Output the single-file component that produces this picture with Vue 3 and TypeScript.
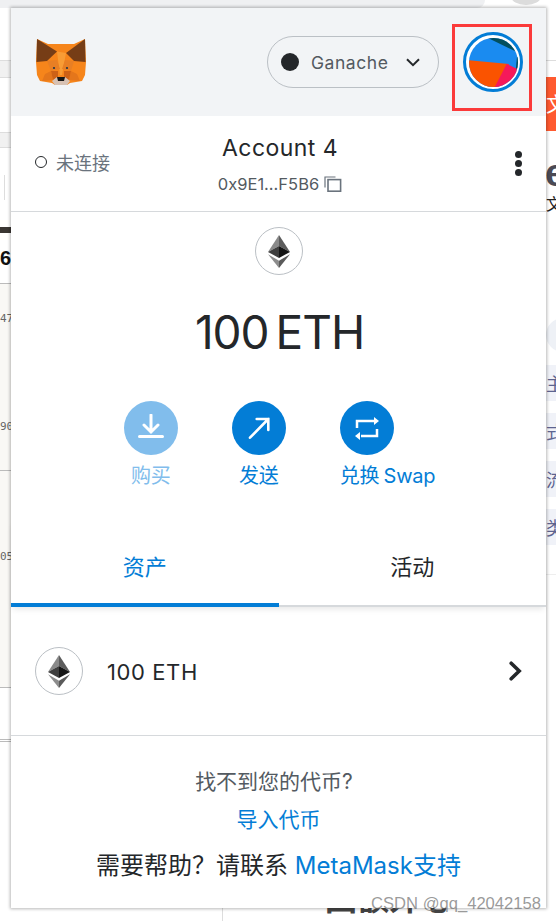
<script setup lang="ts">
const actions = [
  { label: '购买', kind: 'buy', muted: true },
  { label: '发送', kind: 'send', muted: false },
  { label: '兑换 Swap', kind: 'swap', muted: false },
]
</script>

<template>
  <div class="page">
    <div class="scrap top-strip"></div>
    <div class="scrap top-knob"></div>
    <div class="scrap left-band-a"></div>
    <div class="scrap left-band-b"></div>
    <div class="scrap left-tick"></div>
    <div class="scrap left-dark"></div>
    <div class="scrap left-six">6</div>
    <div class="scrap left-beige"></div>
    <div class="scrap left-line-a"></div>
    <div class="scrap left-line-b"></div>
    <div class="scrap left-line-c"></div>
    <div class="scrap left-n47">47</div>
    <div class="scrap left-n90">90</div>
    <div class="scrap left-n05">05</div>
    <div class="scrap right-line"></div>
    <div class="scrap right-red">文</div>
    <div class="scrap right-e">e</div>
    <div class="scrap right-wen">文</div>
    <div class="scrap right-bubble"></div>
    <div class="scrap right-row r1">主</div>
    <div class="scrap right-row r2">式</div>
    <div class="scrap right-row r3">流</div>
    <div class="scrap right-row r4">类</div>
    <div class="scrap bottom-tick"></div>
    <div class="scrap bottom-text">回额外心</div>

    <main class="popup">
      <header class="head">
        <svg class="fox" viewBox="0 0 50 46" width="50" height="46">
          <polygon points="1,0 12,5 38,5 49,0 50,23 49,36 46,42 34,44 31,46 19,46 16,44 4,42 1,36 0,23" fill="#f6851b" />
          <polygon points="1,0 21,12.5 11,22 0.5,23" fill="#763d16" />
          <polygon points="49,0 30,14 38,22 49.5,23" fill="#763d16" />
          <polygon points="21,12.5 30,14 26,36 24,36" fill="#f89c35" />
          <polygon points="11,22 21,21 24,30 15,32" fill="#e87f24" />
          <polygon points="38,22 29,21 26,30 35,32" fill="#e87f24" />
          <polygon points="9,35 15,32 17,41 6,42" fill="#e4761b" />
          <polygon points="41,35 35,32 33,41 44,42" fill="#e4761b" />
          <polygon points="15,32 22,32 22,38 17,41" fill="#cd6116" />
          <polygon points="35,32 28,32 28,38 33,41" fill="#cd6116" />
          <polygon points="16,42 21,38 29,38 34,42 31,46 19,46" fill="#d7c1b3" />
          <polygon points="21,38 29,38 28,42 22,42" fill="#161616" />
          <circle cx="18" cy="29" r="1.1" fill="#233447" />
          <circle cx="31" cy="29" r="1.1" fill="#233447" />
        </svg>
        <div class="network">
          <span class="net-dot"></span>
          <span class="net-name">Ganache</span>
          <svg class="net-chev" viewBox="0 0 14 9" width="14" height="9"><path d="M1 1.2 7 7.2 13 1.2" fill="none" stroke="#24272a" stroke-width="2" /></svg>
        </div>
        <div class="avatar-ring">
          <svg class="avatar" viewBox="0 0 49 49" width="49" height="49">
            <defs><clipPath id="av"><circle cx="24.5" cy="24.5" r="24.5" /></clipPath></defs>
            <g clip-path="url(#av)">
              <rect width="49" height="49" fill="#1a8bf0" />
              <polygon points="19,0 50,-1 50,15" fill="#034f5d" />
              <polygon points="48,19 50,19 50,33 46.8,31" fill="#034f5d" />
              <polygon points="-2,22 40,26 26,52 -2,52" fill="#fa5300" />
              <polygon points="37.8,25.8 47.8,30.8 49,52 25.5,49.5" fill="#f5195a" />
            </g>
          </svg>
        </div>
      </header>

      <section class="account">
        <div class="status"><span class="status-dot"></span><span class="status-text">未连接</span></div>
        <div class="acct-mid">
          <div class="acct-name">Account 4</div>
          <div class="acct-addr">
            <span>0x9E1...F5B6</span>
            <svg class="copy" viewBox="0 0 18 16" width="18" height="16">
              <path d="M1 11.5V1h10.5" fill="none" stroke="#6a737d" stroke-width="1.2" />
              <rect x="4" y="3.6" width="12.6" height="11.6" fill="none" stroke="#6a737d" stroke-width="1.6" />
            </svg>
          </div>
        </div>
        <div class="kebab"><i></i><i></i><i></i></div>
      </section>

      <section class="balance">
        <div class="eth-badge">
          <svg viewBox="0 0 24 36" width="22" height="33">
            <polygon points="12,0 0,18.5 12,12" fill="#8a8a8a" />
            <polygon points="12,0 24,18.5 12,12" fill="#5c5c5c" />
            <polygon points="0,18.5 12,12 12,25" fill="#3e3e3e" />
            <polygon points="24,18.5 12,12 12,25" fill="#151515" />
            <polygon points="0,21 12,28 12,36" fill="#8d8d8d" />
            <polygon points="24,21 12,28 12,36" fill="#5a5a5a" />
          </svg>
        </div>
        <div class="amount">100 ETH</div>
        <div class="actions">
          <div v-for="a in actions" :key="a.kind" class="action" :class="{ muted: a.muted }">
            <span class="action-circle">
              <svg v-if="a.kind === 'buy'" viewBox="0 0 26 28" width="26" height="28">
                <path d="M13 1v17M6 11l7 7 7-7M1.5 22.5h23" fill="none" stroke="#fff" stroke-width="3" stroke-linecap="round" />
              </svg>
              <svg v-else-if="a.kind === 'send'" viewBox="0 0 24 24" width="24" height="24">
                <path d="M3 21.7 21.3 3M9.7 3H21.3V14" fill="none" stroke="#fff" stroke-width="2.6" stroke-linecap="round" />
              </svg>
              <svg v-else viewBox="0 0 24 24" width="24" height="24">
                <path d="M2 12V5H19M22 13V20H6" fill="none" stroke="#fff" stroke-width="2.5" />
                <polygon points="19,1 24,5 19,9" fill="#fff" />
                <polygon points="5,16 0,20 5,24" fill="#fff" />
              </svg>
            </span>
            <span class="action-label">{{ a.label }}</span>
          </div>
        </div>
      </section>

      <nav class="tabs">
        <div class="tab active">资产</div>
        <div class="tab">活动</div>
      </nav>

      <section class="asset">
        <div class="eth-badge">
          <svg viewBox="0 0 24 36" width="22" height="33">
            <polygon points="12,0 0,18.5 12,12" fill="#8a8a8a" />
            <polygon points="12,0 24,18.5 12,12" fill="#5c5c5c" />
            <polygon points="0,18.5 12,12 12,25" fill="#3e3e3e" />
            <polygon points="24,18.5 12,12 12,25" fill="#151515" />
            <polygon points="0,21 12,28 12,36" fill="#8d8d8d" />
            <polygon points="24,21 12,28 12,36" fill="#5a5a5a" />
          </svg>
        </div>
        <span class="asset-text">100 ETH</span>
        <svg class="asset-chev" viewBox="0 0 13 20" width="13" height="20"><path d="M2.2 2.2l8 7.8-8 7.8" fill="none" stroke="#24272a" stroke-width="3.6" stroke-linecap="round" /></svg>
      </section>

      <footer class="foot">
        <div class="foot-q">找不到您的代币?</div>
        <div class="foot-link">导入代币</div>
        <div class="foot-help"><span class="cjk">需要帮助&#xFF1F;请联系</span> <span class="blue">MetaMask支持</span></div>
      </footer>
    </main>

    <div class="redbox"></div>
    <div class="watermark">CSDN @qq_42042158</div>
  </div>
</template>

<style>
html, body { margin: 0; background: #fff; }
</style>

<style scoped>
.page {
  position: relative;
  width: 556px;
  height: 921px;
  overflow: hidden;
  background: #fff;
  font-family: Inter, "Noto Sans CJK SC", sans-serif;
  color: #24272a;
}
.scrap { position: absolute; }
.top-strip { left: 0; width: 485px; top: 0; height: 8px; background: #eff0f2; border-radius: 0 0 8px 0; }
.top-knob { left: 511px; top: -12px; width: 30px; height: 17px; border-radius: 50%; background: #dcdcdc; }
.left-band-a { left: 0; width: 11px; top: 60px; height: 16px; background: #f1f1f1; border-top: 1px solid #ddd; border-bottom: 1px solid #ddd; }
.left-band-b { left: 0; width: 11px; top: 132px; height: 14px; background: #f1f1f1; border-top: 1px solid #ddd; border-bottom: 1px solid #ddd; }
.left-tick { left: 4px; width: 1px; top: 175px; height: 25px; background: #ddd; }
.left-dark { left: 0; width: 11px; top: 227px; height: 6px; background: #3a3633; }
.left-six { left: 0; top: 246px; font: 700 20px/24px "Liberation Sans", sans-serif; color: #111; }
.left-beige { left: 0; width: 11px; top: 283px; height: 405px; background: #f9f8f5; }
.left-line-a { left: 0; width: 11px; top: 283px; height: 1px; background: #bbb; }
.left-line-b { left: 0; width: 11px; top: 470px; height: 1px; background: #bbb; }
.left-line-c { left: 0; width: 11px; top: 687px; height: 1px; background: #bbb; box-shadow: 0 52px 0 #bbb, 0 54px 0 #bbb; }
.left-n47, .left-n90, .left-n05 { left: 0; width: 11px; overflow: hidden; font: 11px/14px "DejaVu Sans Mono", monospace; color: #666; }
.left-n47 { top: 312px; }
.left-n90 { top: 420px; }
.left-n05 { top: 550px; }
.right-line { left: 546px; right: 0; top: 60px; height: 1px; background: #ddd; box-shadow: 0 514px 0 #eee; }
.right-red { left: 546px; right: 0; top: 77px; height: 54px; overflow: hidden; background: #ff5a30; color: #fff; font: 20px/54px "Noto Sans CJK SC", sans-serif; }
.right-e { left: 545px; top: 153px; font: 700 38px/40px "Liberation Sans", sans-serif; color: #4a4a55; }
.right-wen { left: 546px; top: 193px; width: 10px; overflow: hidden; font: 16px/20px "Noto Sans CJK SC", sans-serif; color: #222; }
.right-bubble { left: 546px; top: 318px; width: 30px; height: 34px; background: #eef1f6; border-radius: 17px 0 0 17px; }
.right-row { left: 546px; width: 10px; height: 36px; overflow: hidden; background: #f0f2f8; color: #5d6490; font: 18px/36px "Noto Sans CJK SC", sans-serif; }
.r1 { top: 365px; }
.r2 { top: 413px; }
.r3 { top: 461px; }
.r4 { top: 509px; }
.bottom-tick { left: 222px; top: 908px; width: 1px; height: 13px; background: #ddd; }
.bottom-text { left: 325px; top: 877px; font: 700 32px/38px "Noto Sans CJK SC", sans-serif; color: #444; }

.popup {
  position: absolute;
  left: 11px;
  top: 8px;
  width: 535px;
  height: 900px;
  background: #fff;
  box-shadow: 0 0 3px 1px rgba(0, 0, 0, .28);
  display: flex;
  flex-direction: column;
}
.head {
  height: 108px;
  flex: none;
  background: #f2f4f6;
  display: flex;
  align-items: center;
  padding: 0 23px 0 25px;
  box-sizing: border-box;
}
.fox { flex: none; margin-top: -1px; }
.network {
  margin-left: auto;
  width: 172px;
  height: 52px;
  box-sizing: border-box;
  border: 1px solid #bbc0c5;
  border-radius: 26px;
  display: flex;
  align-items: center;
  padding-left: 13px;
}
.net-dot { width: 18px; height: 18px; border-radius: 50%; background: #24272a; flex: none; }
.net-name { margin-left: 12px; font-size: 17.5px; color: #535a61; letter-spacing: .55px; }
.net-chev { margin-left: 18px; flex: none; }
.avatar-ring {
  margin-left: 24px;
  width: 60px;
  height: 60px;
  box-sizing: border-box;
  border: 3.5px solid #037dd6;
  border-radius: 50%;
  display: flex;
  align-items: center;
  justify-content: center;
  background: #fff;
  flex: none;
}
.avatar { display: block; }

.account {
  height: 96px;
  flex: none;
  box-sizing: border-box;
  border-bottom: 1px solid #d6d9dc;
  position: relative;
  display: flex;
  align-items: center;
  padding: 0 24px;
}
.status { display: flex; align-items: center; width: 183px; flex: none; margin-top: -3px; }
.status-dot { width: 12px; height: 12px; box-sizing: border-box; border: 1.5px solid #24272a; border-radius: 50%; }
.status-text { margin-left: 9px; font-size: 18px; color: #6a737d; }
.acct-mid { width: 124px; display: flex; flex-direction: column; align-items: center; margin-top: 1px; }
.acct-name { font-size: 23px; line-height: 30px; letter-spacing: .45px; white-space: nowrap; }
.acct-addr { display: flex; align-items: center; gap: 5px; font-size: 16.5px; line-height: 24px; color: #535a61; margin-top: 9px; white-space: nowrap; }
.copy { flex: none; }
.kebab { margin-left: auto; margin-right: 0; display: flex; flex-direction: column; gap: 2px; }
.kebab i { display: block; width: 7px; height: 7px; border-radius: 50%; background: #24272a; }

.balance {
  flex: none;
  height: 308px;
  box-sizing: border-box;
  padding-top: 15px;
  display: flex;
  flex-direction: column;
  align-items: center;
}
.eth-badge {
  width: 48px;
  height: 48px;
  box-sizing: border-box;
  border: 1px solid #bbc0c5;
  border-radius: 50%;
  display: flex;
  align-items: center;
  justify-content: center;
  flex: none;
}
.amount { margin: 26px 0 0 2px; font-size: 46px; line-height: 62px; letter-spacing: -1px; word-spacing: -5px; color: #24272a; white-space: nowrap; }
.actions { margin: 38px 0 0 2px; display: flex; gap: 54px; justify-content: center; }
.action { min-width: 54px; display: flex; flex-direction: column; align-items: center; }
.action:last-child { align-items: flex-start; }
.action-circle { width: 54px; height: 54px; border-radius: 50%; background: #037dd6; display: flex; align-items: center; justify-content: center; }
.action-label { margin-top: 7px; font-size: 20px; line-height: 28px; color: #037dd6; white-space: nowrap; word-spacing: -1px; letter-spacing: -.25px; }
.muted .action-circle { background: #81bdec; }
.muted .action-label { color: #81bdec; }

.tabs {
  flex: none;
  height: 87px;
  display: flex;
  box-shadow: 0 4px 6px -2px rgba(0, 0, 0, .1);
  position: relative;
}
.tab {
  flex: 1;
  box-sizing: border-box;
  display: flex;
  align-items: center;
  justify-content: center;
  font-size: 22px;
  color: #24272a;
  padding-top: 5px;
  border-bottom: 2px solid #d6d9dc;
}
.tab.active { color: #037dd6; border-bottom: 4px solid #037dd6; padding-top: 7px; }

.asset {
  flex: none;
  height: 129px;
  box-sizing: border-box;
  border-bottom: 1px solid #d6d9dc;
  display: flex;
  align-items: center;
  padding: 0 24px;
}
.asset-text { margin: 2px 0 0 24px; font-size: 22px; letter-spacing: .6px; }
.asset-chev { margin-left: auto; }

.foot { flex: 1; display: flex; flex-direction: column; align-items: center; padding-top: 31px; }
.foot-q { font-size: 21px; line-height: 30px; color: #535a61; margin-right: 9px; }
.foot-link { margin-top: 8px; font-size: 21px; line-height: 30px; color: #037dd6; }
.foot-help { margin-top: 12px; font-size: 24px; line-height: 34px; color: #24272a; white-space: nowrap; }
.cjk { font-family: "Noto Sans CJK SC", sans-serif; }
.blue { color: #037dd6; }

.redbox {
  position: absolute;
  left: 452px;
  top: 24px;
  width: 80px;
  height: 87px;
  box-sizing: border-box;
  border: 3px solid #fb3a3a;
}
.watermark {
  position: absolute;
  left: 371px;
  top: 893px;
  font: 16.6px/22px "Liberation Sans", sans-serif;
  color: rgba(110, 110, 110, .7);
  white-space: nowrap;
}
</style>
